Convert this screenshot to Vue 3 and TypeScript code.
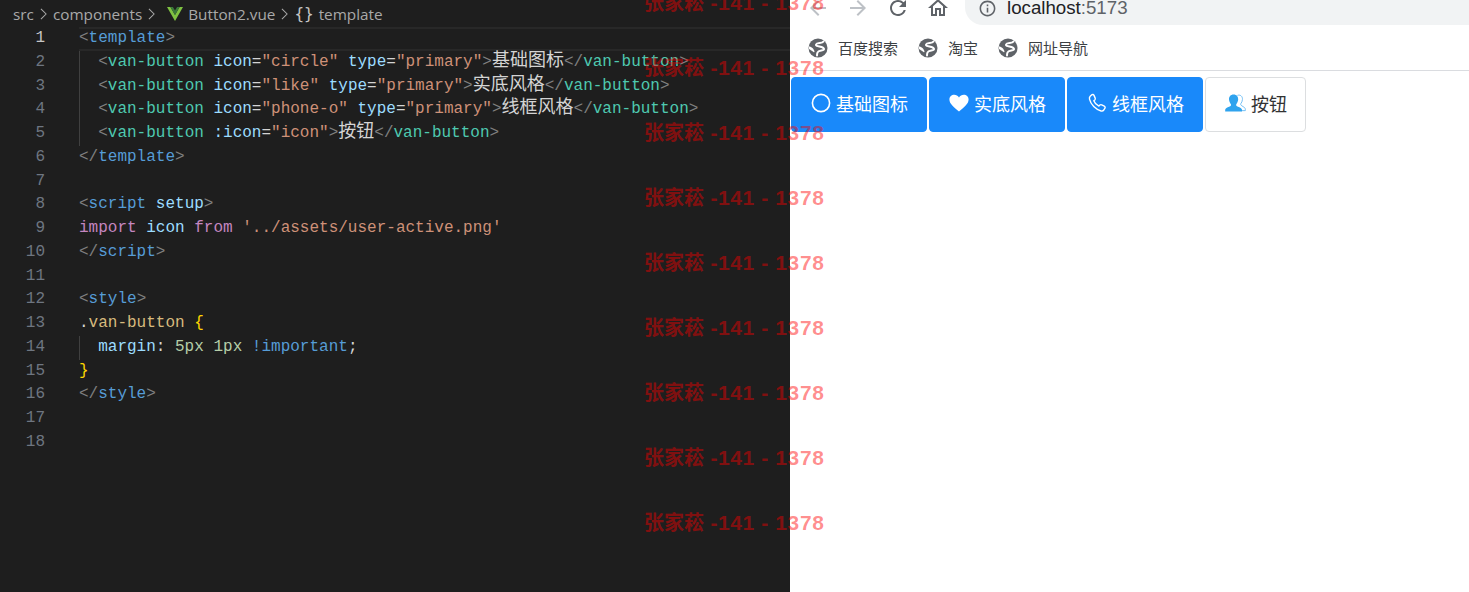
<script setup lang="ts">
type Seg = [string, string]

const P = 'p', T = 't', V = 'v', A = 'a', S = 's', W = 'w', C = 'c', K = 'k', Y = 'y', N = 'n'

const vanOpen = (attr: string, value: string, type: boolean, label: string): Seg[] => {
  const segs: Seg[] = [
    ['', '  '], [P, '<'], [V, 'van-button'], ['', ' '],
    [A, attr], [W, '='], [S, `"${value}"`],
  ]
  if (type) segs.push(['', ' '], [A, 'type'], [W, '='], [S, '"primary"'])
  segs.push([P, '>'], [C, label], [P, '</'], [V, 'van-button'], [P, '>'])
  return segs
}

const lines: Seg[][] = [
  [[P, '<'], [T, 'template'], [P, '>']],
  vanOpen('icon', 'circle', true, '基础图标'),
  vanOpen('icon', 'like', true, '实底风格'),
  vanOpen('icon', 'phone-o', true, '线框风格'),
  vanOpen(':icon', 'icon', false, '按钮'),
  [[P, '</'], [T, 'template'], [P, '>']],
  [],
  [[P, '<'], [T, 'script'], ['', ' '], [A, 'setup'], [P, '>']],
  [[K, 'import'], ['', ' '], [A, 'icon'], ['', ' '], [K, 'from'], ['', ' '], [S, "'../assets/user-active.png'"]],
  [[P, '</'], [T, 'script'], [P, '>']],
  [],
  [[P, '<'], [T, 'style'], [P, '>']],
  [[W, '.'], ['g', 'van-button'], ['', ' '], [Y, '{']],
  [['', '  '], [A, 'margin'], [W, ': '], [N, '5px'], ['', ' '], [N, '1px'], ['', ' '], [T, '!important'], [W, ';']],
  [[Y, '}']],
  [[P, '</'], [T, 'style'], [P, '>']],
  [],
  [],
]

const guided = new Set([1, 2, 3, 4, 13])
const marks = Array.from({ length: 9 }, (_, i) => i)
const bookmarks = ['百度搜索', '淘宝', '网址导航']
</script>

<template>
  <div class="screen">
    <section class="editor">
      <nav class="crumbs">
        <span>src</span>
        <svg class="chev" viewBox="0 0 8 14"><path d="M1 1l6 6-6 6" /></svg>
        <span>components</span>
        <svg class="chev" viewBox="0 0 8 14"><path d="M1 1l6 6-6 6" /></svg>
        <svg class="vue" viewBox="0 0 16 14">
          <path fill="#7fc241" d="M0 0h3.400L8 8l4.600-8H16L8 14z" />
          <path fill="#3c7a3a" d="M3.400 0h2.500L8 3.600 10.100 0h2.500L8 8z" />
        </svg>
        <span>Button2.vue</span>
        <svg class="chev" viewBox="0 0 8 14"><path d="M1 1l6 6-6 6" /></svg>
        <span class="braces">{}</span>
        <span>template</span>
      </nav>
      <div class="code">
        <div v-for="(line, i) in lines" :key="i" class="line" :class="{ active: i === 0 }">
          <span class="num">{{ i + 1 }}</span>
          <span class="text" :class="{ guide: guided.has(i) }"><span v-for="(seg, j) in line" :key="j" :class="seg[0]">{{ seg[1] }}</span></span>
        </div>
      </div>
    </section>

    <section class="browser">
      <header class="toolbar">
        <svg class="tool off" viewBox="0 0 24 24"><path d="M20 11H7.830l5.590-5.590L12 4l-8 8 8 8 1.410-1.410L7.830 13H20v-2z" /></svg>
        <svg class="tool off" viewBox="0 0 24 24"><path d="M4 11h12.170l-5.590-5.590L12 4l8 8-8 8-1.410-1.410L16.170 13H4v-2z" /></svg>
        <svg class="tool" viewBox="0 0 24 24"><path d="M17.650 6.350A7.958 7.958 0 0 0 12 4c-4.420 0-7.990 3.580-7.990 8s3.570 8 7.990 8c3.730 0 6.840-2.550 7.730-6h-2.080A5.990 5.990 0 0 1 12 18c-3.310 0-6-2.690-6-6s2.690-6 6-6c1.660 0 3.140.690 4.220 1.780L13 11h7V4l-2.350 2.350z" /></svg>
        <svg class="tool" viewBox="0 0 24 24"><path d="M12 5.690l5 4.500V18h-2v-6H9v6H7v-7.810l5-4.500M12 3L2 12h3v8h6v-6h2v6h6v-8h3L12 3z" /></svg>
        <div class="url">
          <svg class="info" viewBox="0 0 24 24"><path d="M11 7h2v2h-2zm0 4h2v6h-2zm1-9C6.480 2 2 6.480 2 12s4.480 10 10 10 10-4.480 10-10S17.520 2 12 2zm0 18c-4.410 0-8-3.590-8-8s3.590-8 8-8 8 3.590 8 8-3.590 8-8 8z" /></svg>
          <span class="host">localhost<span class="port">:5173</span></span>
        </div>
      </header>
      <div class="bookmarks">
        <div v-for="b in bookmarks" :key="b" class="bookmark">
          <svg class="globe" viewBox="0 0 24 24">
            <circle cx="12" cy="12" r="9.500" fill="#5f6368" />
            <path fill="none" stroke="#fff" stroke-width="2" stroke-linecap="round" d="M17.500 5.500c-1.500 2.500-6.500.5-7.500 3-.8 2.500 7.500 1.500 8 4.500.3 2-5.500 1-6.500 3.500-.4 1-.5 2-.5 3" />
            <path fill="#fff" d="M3 10.500c2.500 0 5 2.500 5.500 5 .1.800-.5 1-1 .5C5.500 14.500 4 13.500 3 13z" />
          </svg>
          <span>{{ b }}</span>
        </div>
      </div>
      <div class="buttons">
        <button class="btn primary">
          <svg class="ico" viewBox="0 0 20 20"><circle cx="10" cy="10" r="8.600" fill="none" stroke="#fff" stroke-width="1.600" /></svg>
          基础图标
        </button>
        <button class="btn primary">
          <svg class="ico" viewBox="0 0 20 20"><path fill="#fff" d="M10 18.500C5 14.400.4 11 .4 6.600.4 3.600 2.700 1.800 5.200 1.800c2 0 3.700 1 4.800 2.800 1.100-1.800 2.800-2.800 4.800-2.800 2.500 0 4.800 1.800 4.800 4.800C19.600 11 15 14.400 10 18.500z" /></svg>
          实底风格
        </button>
        <button class="btn primary">
          <svg class="ico" viewBox="0 0 20 20"><path fill="none" stroke="#fff" stroke-width="1.400" stroke-linejoin="round" d="M4.600 1.900C5.600 1.200 6.600 1.500 7 2.400L8.200 5.100C8.500 5.800 8.300 6.400 7.800 6.900L6.800 7.800C7.600 10 9.800 12.200 11.900 13.100L12.900 12.100C13.400 11.600 14 11.500 14.700 11.800L17.300 13.100C18.200 13.600 18.400 14.500 17.800 15.400L16.800 17C16.200 17.900 15.200 18.300 14.100 18 8.800 16.600 3.700 11.500 2.500 6.200 2.200 5 2.500 3.900 3.400 3z" /></svg>
          线框风格
        </button>
        <button class="btn plain">
          <svg class="ico" viewBox="0 0 22 20">
            <path fill="none" stroke="#6dbdf4" stroke-width="1" d="M13 2c3-1 5.500 1 5.300 4.200-.1 1.800-.8 3.500-1.800 4.600-.5 1.500 1 2 2.500 3 1.300.8 2.300 1.500 2.300 2.700v1.500h-4" />
            <path fill="#2fa3ee" d="M9 1c3.200 0 5 2.300 4.800 5.400-.1 2-1 3.700-2 4.800-.5 1.600.6 2 2.600 3 1.800.9 3.400 1.600 3.400 3V19H.2v-1.800c0-1.400 1.600-2.100 3.400-3 2-1 3.100-1.400 2.600-3-1-1.100-1.900-2.800-2-4.800C4 3.300 5.800 1 9 1z" />
          </svg>
          按钮
        </button>
      </div>
    </section>

    <div class="marks" aria-hidden="true">
      <div v-for="m in marks" :key="m" class="mark"><span class="mark-name">张家菘</span> -141 - 1378</div>
    </div>
  </div>
</template>

<style scoped>
.screen {
  position: relative;
  display: flex;
  width: 1469px;
  height: 592px;
  overflow: hidden;
  background: #fff;
}

.editor {
  flex: 0 0 790px;
  background: #1e1e1e;
  overflow: hidden;
}

.crumbs {
  display: flex;
  align-items: center;
  height: 26px;
  padding: 1px 0 0 13px;
  box-sizing: border-box;
  color: #a9a9a9;
  font: 15.300px "Open Sans", "Noto Sans", sans-serif;
  white-space: nowrap;
}

.chev {
  flex: 0 0 7px;
  height: 12px;
  margin: 0 6px;
  fill: none;
  stroke: #a9a9a9;
  stroke-width: 1.200;
}

.vue {
  flex: 0 0 16px;
  height: 14px;
  margin: 0 5px 0 6px;
}

.braces {
  margin-right: 5px;
  font: 16px "DejaVu Sans Mono", monospace;
  color: #c5c5c5;
}

.code {
  padding-top: 1px;
  font: 16px/23.760px "Liberation Mono", "Noto Sans CJK SC", monospace;
  color: #d4d4d4;
}

.line {
  display: flex;
  height: 23.760px;
  box-sizing: border-box;
  white-space: pre;
}

.num {
  flex: 0 0 45px;
  text-align: right;
  color: #6e7681;
}

.text {
  flex: 1;
  margin-left: 34px;
}

.active .num {
  color: #c6c6c6;
}

.active .text {
  box-shadow: inset 0 2px 0 #282828, inset 0 -2px 0 #282828;
}

.guide {
  box-shadow: inset 1px 0 0 #404040;
}

.p { color: #808080; }
.t { color: #569cd6; }
.v { color: #4ec9b0; }
.a { color: #9cdcfe; }
.s { color: #ce9178; }
.w { color: #d4d4d4; }
.k { color: #c586c0; }
.y { color: #ffd700; }
.n { color: #b5cea8; }
.g { color: #d7ba7d; }
.c {
  color: #d4d4d4;
  font-size: 18px;
  line-height: 0;
  font-family: "Noto Sans CJK SC", sans-serif;
}

.browser {
  flex: 1;
  font-family: "Noto Sans CJK SC", "Noto Sans", sans-serif;
}

.toolbar {
  display: flex;
  align-items: flex-start;
  gap: 16px;
  height: 25px;
  padding-left: 16px;
}

.tool {
  flex: 0 0 24px;
  height: 24px;
  margin-top: -4px;
  fill: #5f6368;
}

.tool.off {
  fill: #bdc1c6;
}

.url {
  display: flex;
  flex: 1;
  align-items: center;
  gap: 10px;
  height: 25px;
  margin-left: -1px;
  padding: 0 0 9px 13px;
  box-sizing: border-box;
  background: #f1f3f4;
  border-bottom-left-radius: 18px;
}

.info {
  width: 19px;
  height: 19px;
  fill: #5f6368;
}

.host {
  font: 18.700px "Liberation Sans", sans-serif;
  color: #202124;
}

.port {
  color: #5f6368;
}

.bookmarks {
  display: flex;
  align-items: center;
  gap: 18px;
  height: 45px;
  padding-left: 16px;
  border-bottom: 1px solid #dadce0;
  font-size: 15px;
  color: #3c4043;
}

.bookmark {
  display: flex;
  align-items: center;
  gap: 8px;
}

.globe {
  width: 24px;
  height: 24px;
}

.buttons {
  display: flex;
  gap: 2px;
  padding: 6px 0 0 1px;
}

.btn {
  display: flex;
  align-items: center;
  justify-content: center;
  gap: 5px;
  height: 55px;
  padding: 0 0 3px 1px;
  border-radius: 4px;
  font: 18px "Noto Sans CJK SC", sans-serif;
  box-sizing: border-box;
}

.primary {
  width: 136px;
  border: 1px solid #1989fa;
  background: #1989fa;
  color: #fff;
}

.plain {
  width: 101px;
  border: 1px solid #dcdee0;
  background: #fff;
  color: #323233;
}

.ico {
  flex: 0 0 auto;
  width: 20px;
  height: 20px;
}

.plain .ico {
  width: 21px;
}

.marks {
  position: absolute;
  top: -30px;
  left: 644px;
  pointer-events: none;
}

.mark {
  height: 65px;
  font: 700 21px/65px "Liberation Sans", "Noto Sans CJK SC", sans-serif;
  letter-spacing: 0.600px;
  color: rgba(255, 0, 0, 0.45);
  white-space: nowrap;
}

.mark-name {
  font-size: 20px;
  letter-spacing: 0;
}
</style>
